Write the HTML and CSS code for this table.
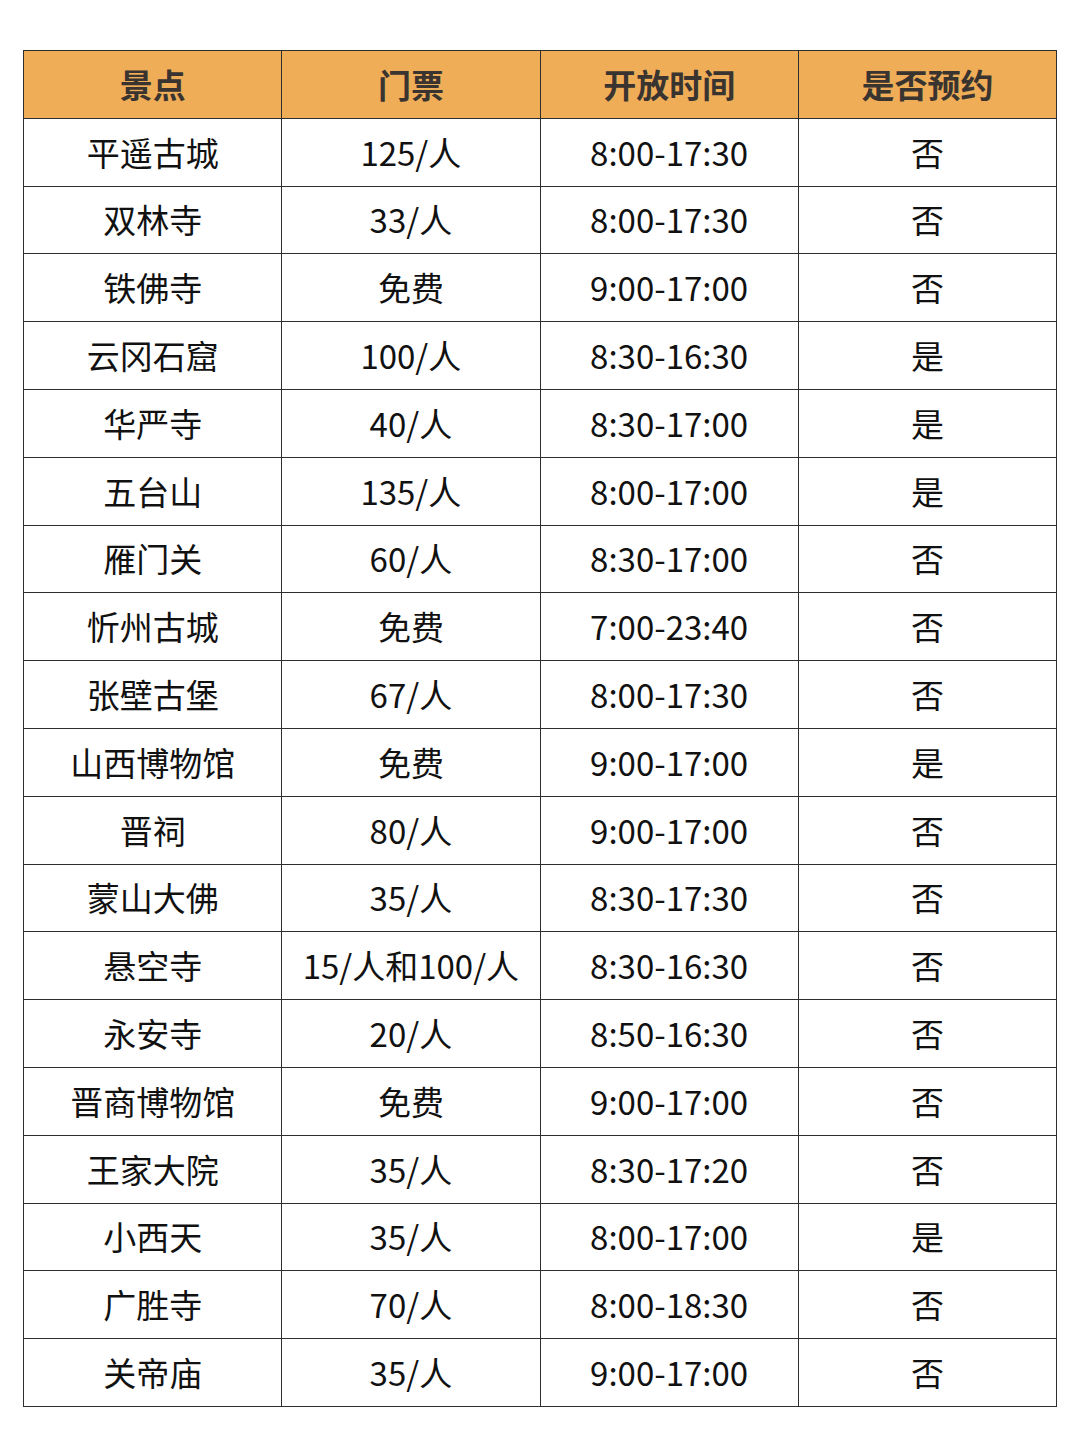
FILE: index.html
```html
<!DOCTYPE html>
<html lang="zh-CN">
<head>
<meta charset="utf-8">
<link rel="stylesheet" href="styles.css">
</head>
<body>
<table class="sheet">
<thead>
<tr><th>景点</th><th>门票</th><th>开放时间</th><th>是否预约</th></tr>
</thead>
<tbody>
<tr><td>平遥古城</td><td>125/人</td><td>8:00-17:30</td><td>否</td></tr>
<tr><td>双林寺</td><td>33/人</td><td>8:00-17:30</td><td>否</td></tr>
<tr><td>铁佛寺</td><td>免费</td><td>9:00-17:00</td><td>否</td></tr>
<tr><td>云冈石窟</td><td>100/人</td><td>8:30-16:30</td><td>是</td></tr>
<tr><td>华严寺</td><td>40/人</td><td>8:30-17:00</td><td>是</td></tr>
<tr><td>五台山</td><td>135/人</td><td>8:00-17:00</td><td>是</td></tr>
<tr><td>雁门关</td><td>60/人</td><td>8:30-17:00</td><td>否</td></tr>
<tr><td>忻州古城</td><td>免费</td><td>7:00-23:40</td><td>否</td></tr>
<tr><td>张壁古堡</td><td>67/人</td><td>8:00-17:30</td><td>否</td></tr>
<tr><td>山西博物馆</td><td>免费</td><td>9:00-17:00</td><td>是</td></tr>
<tr><td>晋祠</td><td>80/人</td><td>9:00-17:00</td><td>否</td></tr>
<tr><td>蒙山大佛</td><td>35/人</td><td>8:30-17:30</td><td>否</td></tr>
<tr><td>悬空寺</td><td>15/人和100/人</td><td>8:30-16:30</td><td>否</td></tr>
<tr><td>永安寺</td><td>20/人</td><td>8:50-16:30</td><td>否</td></tr>
<tr><td>晋商博物馆</td><td>免费</td><td>9:00-17:00</td><td>否</td></tr>
<tr><td>王家大院</td><td>35/人</td><td>8:30-17:20</td><td>否</td></tr>
<tr><td>小西天</td><td>35/人</td><td>8:00-17:00</td><td>是</td></tr>
<tr><td>广胜寺</td><td>70/人</td><td>8:00-18:30</td><td>否</td></tr>
<tr><td>关帝庙</td><td>35/人</td><td>9:00-17:00</td><td>否</td></tr>
</tbody>
</table>
</body>
</html>
```
FILE: styles.css
```css
html, body {
  margin: 0;
  padding: 0;
  background: #ffffff;
}
body {
  padding: 50px 0 0 23px;
  font-family: "Noto Sans CJK SC", "Noto Sans", sans-serif;
}
.sheet {
  border-collapse: collapse;
  width: 1034px;
  table-layout: fixed;
}
.sheet th,
.sheet td {
  border: 1.5px solid #2e2e2e;
  text-align: center;
  vertical-align: middle;
  padding: 0;
  font-size: 33px;
  line-height: 1;
}
.sheet tr {
  height: 67.8px;
}
.sheet th {
  background: #f0ad58;
  color: #3a3430;
  font-weight: 700;
}
.sheet td {
  color: #111111;
  font-weight: 400;
}
```
